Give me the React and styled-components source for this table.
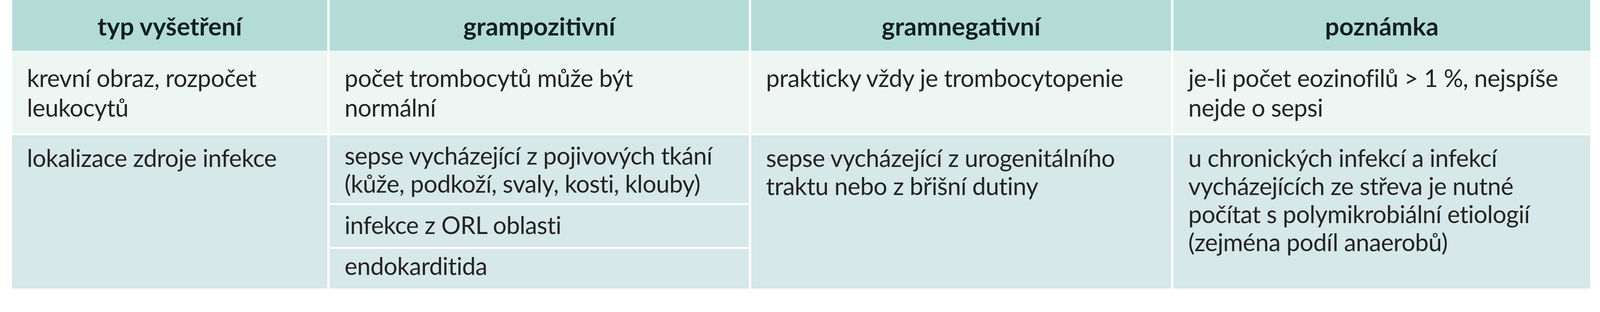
import React from "react";
import styled, { createGlobalStyle } from "styled-components";

const GlobalStyle = createGlobalStyle`
  html, body {
    margin: 0;
    padding: 0;
    background: #ffffff;
  }
  body {
    font-family: Lato, "Open Sans", "Liberation Sans", sans-serif;
    color: #242424;
  }
`;

const tones = {
  head: "#b4dcd7",
  light: "#eef6f4",
  dark: "#d6e8e7",
};

const Page = styled.div`
  width: 4167px;
  height: 800px;
  background: #ffffff;
  padding-left: 31px;
  box-sizing: border-box;
`;

const Table = styled.div`
  width: 4039px;
  display: flex;
  flex-direction: column;
  background: #ffffff;
`;

const Row = styled.div`
  display: grid;
  grid-template-columns: 807px 1073px 1075px 1067px;
  column-gap: 6px;
  height: ${(p) => p.$height}px;
  margin-top: ${(p) => p.$gapTop || 0}px;
`;

const Cell = styled.div`
  background: ${(p) => tones[p.$tone]};
  padding: ${(p) => p.$padTop || 0}px 38px 0 38px;
  font-size: 62px;
  letter-spacing: -0.6px;
  line-height: ${(p) => p.$lh || 74}px;
  white-space: nowrap;
  box-sizing: border-box;
`;

const HeadCell = styled(Cell)`
  font-size: 64px;
  letter-spacing: 0;
  font-weight: 700;
  text-align: center;
  color: #102020;
  padding-left: 0;
  padding-right: 0;
`;

const Stack = styled.div`
  display: grid;
  grid-template-rows: 174px 107px 102px;
  row-gap: 5px;
`;

const Lines = ({ lines }) =>
  lines.map((l, i) => (
    <React.Fragment key={i}>
      {i > 0 && <br />}
      {l}
    </React.Fragment>
  ));

export default function App() {
  return (
    <Page>
      <GlobalStyle />
      <Table>
        <Row $height={130}>
          {["typ vyšetření", "grampozitivní", "gramnegativní", "poznámka"].map(
            (h) => (
              <HeadCell key={h} $tone="head" $padTop={27} $lh={80}>
                {h}
              </HeadCell>
            )
          )}
        </Row>

        <Row $height={212}>
          <Cell $tone="light" $padTop={31} $lh={76}>
            <Lines lines={["krevní obraz, rozpočet", "leukocytů"]} />
          </Cell>
          <Cell $tone="light" $padTop={31} $lh={76}>
            <Lines lines={["počet trombocytů může být", "normální"]} />
          </Cell>
          <Cell $tone="light" $padTop={31} $lh={76}>
            prakticky vždy je trombocytopenie
          </Cell>
          <Cell $tone="light" $padTop={31} $lh={76}>
            <Lines lines={["je-li počet eozinofilů > 1 %, nejspíše", "nejde o sepsi"]} />
          </Cell>
        </Row>

        <Row $height={393} $gapTop={5}>
          <Cell $tone="dark" $padTop={21} $lh={72}>
            lokalizace zdroje infekce
          </Cell>
          <Stack>
            <Cell $tone="dark" $padTop={15} $lh={72}>
              <Lines
                lines={[
                  "sepse vycházející z pojivových tkání",
                  "(kůže, podkoží, svaly, kosti, klouby)",
                ]}
              />
            </Cell>
            <Cell $tone="dark" $padTop={14} $lh={72}>
              infekce z ORL oblasti
            </Cell>
            <Cell $tone="dark" $padTop={7} $lh={72}>
              endokarditida
            </Cell>
          </Stack>
          <Cell $tone="dark" $padTop={21} $lh={72}>
            <Lines
              lines={[
                "sepse vycházející z urogenitálního",
                "traktu nebo z břišní dutiny",
              ]}
            />
          </Cell>
          <Cell $tone="dark" $padTop={21} $lh={72}>
            <Lines
              lines={[
                "u chronických infekcí a infekcí",
                "vycházejících ze střeva je nutné",
                "počítat s polymikrobiální etiologií",
                "(zejména podíl anaerobů)",
              ]}
            />
          </Cell>
        </Row>
      </Table>
    </Page>
  );
}
